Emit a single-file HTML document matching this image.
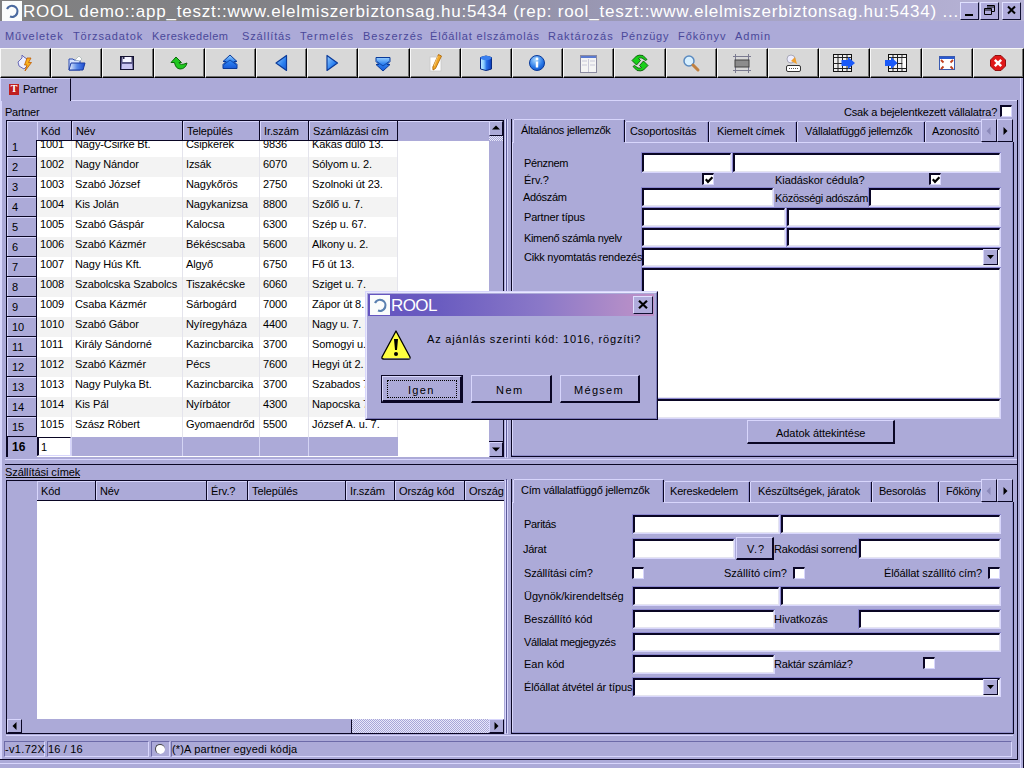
<!DOCTYPE html>
<html><head><meta charset="utf-8"><style>
html,body{margin:0;padding:0}
body{width:1024px;height:768px;overflow:hidden;position:relative;background:#acaad8;font-family:'Liberation Sans', sans-serif;font-size:11px;color:#000}
.a{position:absolute}
.t{white-space:nowrap}
svg{overflow:visible}
</style></head><body>
<div class="a" style="left:0px;top:0px;width:1024px;height:21px;background:linear-gradient(to right,#808080 0%,#828288 30%,#9c9ab8 62%,#b8b4d8 100%)"></div>
<div class="a" style="left:2px;top:1px;width:20px;height:20px;background:#fafcfc"></div>
<svg class="a" style="left:4px;top:3px" width="16" height="16" viewBox="0 0 16 16"><path d="M3 6 A5.5 5.5 0 1 1 6 13.5" stroke="#4a6aa0" stroke-width="2.2" fill="none"/></svg>
<div class="a t" style="left:23px;top:3px;font-size:17px;line-height:17px;color:#fff;letter-spacing:0.78px">ROOL demo::app_teszt::www.elelmiszerbiztonsag.hu:5434 (rep: rool_teszt::www.elelmiszerbiztonsag.hu:5434) ...</div>
<div class="a" style="left:960px;top:2px;width:19px;height:18px;background:#b0acdc;box-sizing:border-box;border-top:1px solid #e0e0ff;border-left:1px solid #e0e0ff;border-right:1px solid #101030;border-bottom:1px solid #101030;"></div>
<div class="a" style="left:965px;top:14px;width:8px;height:2px;background:#000"></div>
<div class="a" style="left:980px;top:2px;width:19px;height:18px;background:#b0acdc;box-sizing:border-box;border-top:1px solid #e0e0ff;border-left:1px solid #e0e0ff;border-right:1px solid #101030;border-bottom:1px solid #101030;"></div>
<svg class="a" style="left:984px;top:5px" width="11" height="10" viewBox="0 0 11 10"><path d="M3 0.5 H10.5 V6.5 H8 M3 2 H10.5 M0.5 3.5 H7.5 V9.5 H0.5 Z M0.5 5 H7.5" stroke="#000" stroke-width="1" fill="none"/></svg>
<div class="a" style="left:1002px;top:2px;width:19px;height:18px;background:#b0acdc;box-sizing:border-box;border-top:1px solid #e0e0ff;border-left:1px solid #e0e0ff;border-right:1px solid #101030;border-bottom:1px solid #101030;"></div>
<svg class="a" style="left:1007px;top:6px" width="9" height="8" viewBox="0 0 9 8"><path d="M1 0.5 L8 7.5 M8 0.5 L1 7.5" stroke="#000" stroke-width="2" fill="none"/></svg>
<div class="a t" style="left:5px;top:31px;font-size:11px;line-height:11px;color:#4a489a;letter-spacing:0.94px">Műveletek</div>
<div class="a t" style="left:73px;top:31px;font-size:11px;line-height:11px;color:#4a489a;letter-spacing:0.86px">Törzsadatok</div>
<div class="a t" style="left:152px;top:31px;font-size:11px;line-height:11px;color:#4a489a;letter-spacing:0.52px">Kereskedelem</div>
<div class="a t" style="left:242px;top:31px;font-size:11px;line-height:11px;color:#4a489a;letter-spacing:0.88px">Szállítás</div>
<div class="a t" style="left:300px;top:31px;font-size:11px;line-height:11px;color:#4a489a;letter-spacing:1.2px">Termelés</div>
<div class="a t" style="left:363px;top:31px;font-size:11px;line-height:11px;color:#4a489a;letter-spacing:1.0px">Beszerzés</div>
<div class="a t" style="left:430px;top:31px;font-size:11px;line-height:11px;color:#4a489a;letter-spacing:0.82px">Élőállat elszámolás</div>
<div class="a t" style="left:548px;top:31px;font-size:11px;line-height:11px;color:#4a489a;letter-spacing:1.0px">Raktározás</div>
<div class="a t" style="left:621px;top:31px;font-size:11px;line-height:11px;color:#4a489a;letter-spacing:0.78px">Pénzügy</div>
<div class="a t" style="left:678px;top:31px;font-size:11px;line-height:11px;color:#4a489a;letter-spacing:1.0px">Főkönyv</div>
<div class="a t" style="left:735px;top:31px;font-size:11px;line-height:11px;color:#4a489a;letter-spacing:1.0px">Admin</div>
<div class="a" style="left:0px;top:48px;width:51px;height:30px;background:#d8d8d8;box-sizing:border-box;border-top:1px solid #f8f8f8;border-left:1px solid #f8f8f8;border-right:1px solid #000;border-bottom:1px solid #000;box-shadow:inset -1px -1px 0 #707070"></div>
<div class="a" style="left:51px;top:48px;width:51px;height:30px;background:#d8d8d8;box-sizing:border-box;border-top:1px solid #f8f8f8;border-left:1px solid #f8f8f8;border-right:1px solid #000;border-bottom:1px solid #000;box-shadow:inset -1px -1px 0 #707070"></div>
<div class="a" style="left:102px;top:48px;width:52px;height:30px;background:#d8d8d8;box-sizing:border-box;border-top:1px solid #f8f8f8;border-left:1px solid #f8f8f8;border-right:1px solid #000;border-bottom:1px solid #000;box-shadow:inset -1px -1px 0 #707070"></div>
<div class="a" style="left:154px;top:48px;width:51px;height:30px;background:#d8d8d8;box-sizing:border-box;border-top:1px solid #f8f8f8;border-left:1px solid #f8f8f8;border-right:1px solid #000;border-bottom:1px solid #000;box-shadow:inset -1px -1px 0 #707070"></div>
<div class="a" style="left:205px;top:48px;width:51px;height:30px;background:#d8d8d8;box-sizing:border-box;border-top:1px solid #f8f8f8;border-left:1px solid #f8f8f8;border-right:1px solid #000;border-bottom:1px solid #000;box-shadow:inset -1px -1px 0 #707070"></div>
<div class="a" style="left:256px;top:48px;width:51px;height:30px;background:#d8d8d8;box-sizing:border-box;border-top:1px solid #f8f8f8;border-left:1px solid #f8f8f8;border-right:1px solid #000;border-bottom:1px solid #000;box-shadow:inset -1px -1px 0 #707070"></div>
<div class="a" style="left:307px;top:48px;width:51px;height:30px;background:#d8d8d8;box-sizing:border-box;border-top:1px solid #f8f8f8;border-left:1px solid #f8f8f8;border-right:1px solid #000;border-bottom:1px solid #000;box-shadow:inset -1px -1px 0 #707070"></div>
<div class="a" style="left:358px;top:48px;width:52px;height:30px;background:#d8d8d8;box-sizing:border-box;border-top:1px solid #f8f8f8;border-left:1px solid #f8f8f8;border-right:1px solid #000;border-bottom:1px solid #000;box-shadow:inset -1px -1px 0 #707070"></div>
<div class="a" style="left:410px;top:48px;width:51px;height:30px;background:#d8d8d8;box-sizing:border-box;border-top:1px solid #f8f8f8;border-left:1px solid #f8f8f8;border-right:1px solid #000;border-bottom:1px solid #000;box-shadow:inset -1px -1px 0 #707070"></div>
<div class="a" style="left:461px;top:48px;width:51px;height:30px;background:#d8d8d8;box-sizing:border-box;border-top:1px solid #f8f8f8;border-left:1px solid #f8f8f8;border-right:1px solid #000;border-bottom:1px solid #000;box-shadow:inset -1px -1px 0 #707070"></div>
<div class="a" style="left:512px;top:48px;width:51px;height:30px;background:#d8d8d8;box-sizing:border-box;border-top:1px solid #f8f8f8;border-left:1px solid #f8f8f8;border-right:1px solid #000;border-bottom:1px solid #000;box-shadow:inset -1px -1px 0 #707070"></div>
<div class="a" style="left:563px;top:48px;width:51px;height:30px;background:#d8d8d8;box-sizing:border-box;border-top:1px solid #f8f8f8;border-left:1px solid #f8f8f8;border-right:1px solid #000;border-bottom:1px solid #000;box-shadow:inset -1px -1px 0 #707070"></div>
<div class="a" style="left:614px;top:48px;width:52px;height:30px;background:#d8d8d8;box-sizing:border-box;border-top:1px solid #f8f8f8;border-left:1px solid #f8f8f8;border-right:1px solid #000;border-bottom:1px solid #000;box-shadow:inset -1px -1px 0 #707070"></div>
<div class="a" style="left:666px;top:48px;width:51px;height:30px;background:#d8d8d8;box-sizing:border-box;border-top:1px solid #f8f8f8;border-left:1px solid #f8f8f8;border-right:1px solid #000;border-bottom:1px solid #000;box-shadow:inset -1px -1px 0 #707070"></div>
<div class="a" style="left:717px;top:48px;width:51px;height:30px;background:#d8d8d8;box-sizing:border-box;border-top:1px solid #f8f8f8;border-left:1px solid #f8f8f8;border-right:1px solid #000;border-bottom:1px solid #000;box-shadow:inset -1px -1px 0 #707070"></div>
<div class="a" style="left:768px;top:48px;width:51px;height:30px;background:#d8d8d8;box-sizing:border-box;border-top:1px solid #f8f8f8;border-left:1px solid #f8f8f8;border-right:1px solid #000;border-bottom:1px solid #000;box-shadow:inset -1px -1px 0 #707070"></div>
<div class="a" style="left:819px;top:48px;width:51px;height:30px;background:#d8d8d8;box-sizing:border-box;border-top:1px solid #f8f8f8;border-left:1px solid #f8f8f8;border-right:1px solid #000;border-bottom:1px solid #000;box-shadow:inset -1px -1px 0 #707070"></div>
<div class="a" style="left:870px;top:48px;width:52px;height:30px;background:#d8d8d8;box-sizing:border-box;border-top:1px solid #f8f8f8;border-left:1px solid #f8f8f8;border-right:1px solid #000;border-bottom:1px solid #000;box-shadow:inset -1px -1px 0 #707070"></div>
<div class="a" style="left:922px;top:48px;width:51px;height:30px;background:#d8d8d8;box-sizing:border-box;border-top:1px solid #f8f8f8;border-left:1px solid #f8f8f8;border-right:1px solid #000;border-bottom:1px solid #000;box-shadow:inset -1px -1px 0 #707070"></div>
<div class="a" style="left:973px;top:48px;width:51px;height:30px;background:#d8d8d8;box-sizing:border-box;border-top:1px solid #f8f8f8;border-left:1px solid #f8f8f8;border-right:1px solid #000;border-bottom:1px solid #000;box-shadow:inset -1px -1px 0 #707070"></div>
<svg class="a" style="left:15px;top:53px" width="22" height="20" viewBox="0 0 22 20"><path d="M3 9 L7 5 L7 2 L9 4 L12 6 L13 12 L9 16 L4 13 Z" fill="#eceeff" stroke="#6a6ab8" stroke-width="1"/><path d="M12 5 L16 5 L13.5 9.5 L16.5 9.5 L10 18 L12 12 L9.5 12 Z" fill="#f8b020" stroke="#c05a00" stroke-width="0.8"/></svg>
<svg class="a" style="left:66px;top:53px" width="22" height="20" viewBox="0 0 22 20"><defs><linearGradient id="fg" x1="0" x2="1"><stop offset="0" stop-color="#f0f4ff"/><stop offset="0.5" stop-color="#5a8ae8"/><stop offset="1" stop-color="#1a4ad0"/></linearGradient></defs><path d="M3 6 H7 L8 7 H14 V17 H3 Z" fill="#d8e4ff" stroke="#2a4ab0" stroke-width="1"/><path d="M9 7 L13 3 L16 6 L14 8Z" fill="#fff" stroke="#9aa" stroke-width="0.6"/><path d="M5 10 H19 L17 17 H3 Z" fill="url(#fg)" stroke="#1a3aa0" stroke-width="1"/></svg>
<svg class="a" style="left:117px;top:53px" width="22" height="20" viewBox="0 0 22 20"><defs><linearGradient id="fl" x1="0" y1="0" x2="0" y2="1"><stop offset="0" stop-color="#2a2850"/><stop offset="1" stop-color="#8a88c0"/></linearGradient></defs><rect x="3.5" y="3.5" width="13" height="13" fill="url(#fl)" stroke="#141230"/><rect x="5.5" y="4" width="9" height="5" fill="#f4f4ff"/><rect x="5" y="11" width="10" height="5" fill="#c8c4f0"/><rect x="6" y="4" width="1.5" height="2" fill="#2a2850"/></svg>
<svg class="a" style="left:169px;top:53px" width="22" height="20" viewBox="0 0 22 20"><path d="M7 4 L12.5 9.5 L10 9.5 Q11 13 18 10 Q16.5 16 11 16 Q6.5 15.5 5.5 9.5 L2 9.5 Z" fill="#20c820" stroke="#0a6a0a" stroke-width="1" stroke-linejoin="round"/></svg>
<svg class="a" style="left:220px;top:53px" width="22" height="20" viewBox="0 0 22 20"><defs><linearGradient id="bu" x1="0" y1="0" x2="0" y2="1"><stop offset="0" stop-color="#9ad0ff"/><stop offset="0.5" stop-color="#2a80f0"/><stop offset="1" stop-color="#1a5ad8"/></linearGradient></defs><path d="M10 2 L17 8.5 L14 8.5 L17 11.5 L17 15.5 L3 15.5 L3 11.5 L6 8.5 L3 8.5 Z" fill="url(#bu)" stroke="#0a3a9a" stroke-width="1" stroke-linejoin="round"/><path d="M4 11.5 L10 7 L16 11.5" stroke="#0a3a9a" stroke-width="0.8" fill="none"/></svg>
<svg class="a" style="left:271px;top:53px" width="22" height="20" viewBox="0 0 22 20"><defs><linearGradient id="bl" x1="0" y1="0" x2="1" y2="1"><stop offset="0" stop-color="#9ad0ff"/><stop offset="0.6" stop-color="#2a80f0"/><stop offset="1" stop-color="#1a5ad8"/></linearGradient></defs><path d="M15.5 2.5 L15.5 17.5 L5 10 Z" fill="url(#bl)" stroke="#0a3a9a" stroke-width="1.2" stroke-linejoin="round"/></svg>
<svg class="a" style="left:322px;top:53px" width="22" height="20" viewBox="0 0 22 20"><path d="M5 2.5 L5 17.5 L15.5 10 Z" fill="url(#bl)" stroke="#0a3a9a" stroke-width="1.2" stroke-linejoin="round"/></svg>
<svg class="a" style="left:373px;top:53px" width="22" height="20" viewBox="0 0 22 20"><path d="M10 18 L17 11.5 L14 11.5 L17 8.5 L17 4.5 L3 4.5 L3 8.5 L6 11.5 L3 11.5 Z" fill="url(#bu)" stroke="#0a3a9a" stroke-width="1" stroke-linejoin="round"/><path d="M4 8.5 L10 13 L16 8.5" stroke="#0a3a9a" stroke-width="0.8" fill="none"/></svg>
<svg class="a" style="left:425px;top:53px" width="22" height="20" viewBox="0 0 22 20"><rect x="5" y="4" width="11" height="14" fill="#fff" stroke="#c8c8c8" stroke-width="0.8"/><path d="M13.5 1.5 L16.5 3 L10.5 15.5 L8 17 L7.8 14 Z" fill="#f0a828" stroke="#a86000" stroke-width="0.8"/><path d="M13 3 L9 13" stroke="#ffd890" stroke-width="0.8"/></svg>
<svg class="a" style="left:476px;top:53px" width="22" height="20" viewBox="0 0 22 20"><defs><linearGradient id="cg" x1="0" x2="1"><stop offset="0" stop-color="#c8ecff"/><stop offset="0.3" stop-color="#88ccff"/><stop offset="0.55" stop-color="#2a70e8"/><stop offset="1" stop-color="#0a3ab8"/></linearGradient></defs><path d="M4.5 4.5 Q10 1.5 15.5 4.5 V16 Q10 19 4.5 16 Z" fill="url(#cg)" stroke="#0a2a80" stroke-width="1"/><ellipse cx="10" cy="5" rx="5.5" ry="2.2" fill="#3a80f0"/></svg>
<svg class="a" style="left:527px;top:53px" width="22" height="20" viewBox="0 0 22 20"><defs><radialGradient id="ig" cx="0.4" cy="0.3" r="0.8"><stop offset="0" stop-color="#a8d8ff"/><stop offset="0.6" stop-color="#2a7ae8"/><stop offset="1" stop-color="#0a4ac0"/></radialGradient></defs><circle cx="10" cy="10" r="7.5" fill="url(#ig)" stroke="#0a3a9a" stroke-width="1"/><circle cx="10" cy="6" r="1.4" fill="#fff"/><rect x="8.8" y="8.5" width="2.4" height="6" fill="#fff"/></svg>
<svg class="a" style="left:578px;top:53px" width="22" height="20" viewBox="0 0 22 20"><rect x="2.5" y="2.5" width="16" height="17" fill="#f4f4f4" stroke="#8a8aa0"/><rect x="3" y="3" width="15" height="2" fill="#5a7ad0"/><path d="M10.5 6 V19 M4 8 H9 M12 8 H17 M4 12 H9 M12 12 H17" stroke="#c8c8d8" stroke-width="1"/></svg>
<svg class="a" style="left:629px;top:53px" width="22" height="20" viewBox="0 0 22 20"><path d="M3 7.5 L7.5 3 Q10 1.5 14 2.5 L18 6.5 L16.5 7.5 L13 5 Q10.5 4.5 9.5 5.5 L11.5 7.5 L7.5 12 Z" fill="#18d018" stroke="#0a5a0a" stroke-width="0.9" stroke-linejoin="round"/><path d="M19 12.5 L14.5 17 Q12 18.5 8 17.5 L4 13.5 L5.5 12.5 L9 15 Q11.5 15.5 12.5 14.5 L10.5 12.5 L14.5 8 Z" fill="#18d018" stroke="#0a5a0a" stroke-width="0.9" stroke-linejoin="round"/></svg>
<svg class="a" style="left:681px;top:53px" width="22" height="20" viewBox="0 0 22 20"><circle cx="8" cy="8" r="5" fill="#d8f0ff" stroke="#5a8ac0" stroke-width="1.5"/><path d="M12 12 L17 17" stroke="#c08040" stroke-width="3" stroke-linecap="round"/></svg>
<svg class="a" style="left:732px;top:53px" width="22" height="20" viewBox="0 0 22 20"><path d="M1 3.5 H19 M1 17.5 H19 M3.5 1 V20 M16.5 1 V20" stroke="#7a7a90" stroke-width="1"/><rect x="3" y="7" width="14" height="7" fill="#8c8c8c" stroke="#404040" stroke-width="1"/></svg>
<svg class="a" style="left:783px;top:53px" width="22" height="20" viewBox="0 0 22 20"><circle cx="8" cy="6" r="4" fill="#eef" stroke="#99a" stroke-width="0.8"/><path d="M8 8 L12 4 L14 11 Z" fill="#f0a030"/><rect x="3.5" y="12.5" width="14" height="6" rx="1.5" fill="#fff" stroke="#333" stroke-width="1"/><path d="M6 15.5 H15" stroke="#555" stroke-dasharray="1 1"/></svg>
<svg class="a" style="left:834px;top:53px" width="22" height="20" viewBox="0 0 22 20"><rect x="-0.5" y="1.5" width="18" height="17" fill="#eee" stroke="#111"/><path d="M-0.5 4.5 H17.5 M-0.5 10.5 H17.5 M-0.5 15.5 H17.5 M4 1.5 V18.5 M8.5 1.5 V18.5 M13 1.5 V18.5" stroke="#222"/><path d="M7.5 7 H14 V4 L21 10 L14 16 V13 H7.5Z" fill="#1a5af8"/></svg>
<svg class="a" style="left:885px;top:53px" width="22" height="20" viewBox="0 0 22 20"><rect x="3.5" y="1.5" width="18" height="17" fill="#eee" stroke="#111"/><path d="M3.5 4.5 H21.5 M3.5 10.5 H21.5 M3.5 15.5 H21.5 M8 1.5 V18.5 M12.5 1.5 V18.5 M17 1.5 V18.5" stroke="#222"/><rect x="17.5" y="5" width="3.5" height="10" fill="#fff"/><path d="M0 7 H6 V4 L12.5 10 L6 16 V13 H0Z" fill="#1a5af8"/></svg>
<svg class="a" style="left:937px;top:53px" width="22" height="20" viewBox="0 0 22 20"><rect x="2.5" y="3.5" width="15" height="13" fill="#fff" stroke="#3a5ab0"/><rect x="3" y="4" width="14" height="2" fill="#2a5ad0"/><path d="M4 7 L6.5 9.5 M16 7 L13.5 9.5 M4 16 L6.5 13.5 M16 16 L13.5 13.5" stroke="#c04020" stroke-width="1.8"/></svg>
<svg class="a" style="left:988px;top:53px" width="22" height="20" viewBox="0 0 22 20"><path d="M7 2.5 H13 L17.5 7 V13 L13 17.5 H7 L2.5 13 V7 Z" fill="#e01818" stroke="#901010" stroke-width="1"/><path d="M6.8 6.8 L13.2 13.2 M13.2 6.8 L6.8 13.2" stroke="#fff" stroke-width="2.4"/></svg>
<div class="a" style="left:0px;top:78px;width:1024px;height:690px;background:#acaad8"></div>
<div class="a" style="left:71px;top:100px;width:946px;height:1px;background:#d8d6fc"></div>
<div class="a" style="left:0px;top:78px;width:71px;height:23px;background:#acaad8;box-sizing:border-box;border-top:1px solid #d8d6fc;border-left:1px solid #d8d6fc;border-right:1px solid #0a0624;"></div>
<div class="a" style="left:9px;top:84px;width:10px;height:11px;background:#c02020;border:0"></div>
<div class="a" style="left:9px;top:83px;width:10px;height:12px;color:#fff;font:bold 10px/12px 'Liberation Serif';text-align:center">T</div>
<div class="a t" style="left:23px;top:84px;font-size:11px;line-height:11px;letter-spacing:-0.25px">Partner</div>
<div class="a" style="left:0px;top:101px;width:2px;height:658px;background:#d8d6fc"></div>
<div class="a" style="left:1017px;top:100px;width:1px;height:660px;background:#0a0624"></div>
<div class="a" style="left:0px;top:759px;width:1018px;height:1px;background:#0a0624"></div>
<div class="a" style="left:1020px;top:78px;width:1px;height:690px;background:#d8d6fc"></div>
<div class="a" style="left:1023px;top:78px;width:1px;height:690px;background:#0a0624"></div>
<div class="a" style="left:0px;top:763px;width:1021px;height:1px;background:#d8d6fc"></div>
<div class="a t" style="left:5px;top:107px;font-size:11px;line-height:11px;letter-spacing:-0.25px">Partner</div>
<div class="a t" style="left:844px;top:107px;font-size:11px;line-height:11px;letter-spacing:-0.16px">Csak a bejelentkezett vállalatra?</div>
<div class="a" style="left:1000px;top:105px;width:12px;height:12px;background:#fff;box-sizing:border-box;border-top:2px solid #0a0624;border-left:2px solid #0a0624;border-right:1px solid #d8d6fc;border-bottom:1px solid #d8d6fc"></div>
<div class="a" style="left:6px;top:120px;width:1px;height:337px;background:#0a0624"></div>
<div class="a" style="left:6px;top:120px;width:498px;height:1px;background:#0a0624"></div>
<div class="a" style="left:503px;top:120px;width:1px;height:337px;background:#0a0624"></div>
<div class="a" style="left:37px;top:141px;width:452px;height:316px;background:#fff"></div>
<div class="a" style="left:37px;top:141px;width:452px;height:296px;overflow:hidden"><div class="a t" style="left:3px;top:-2px;font-size:11px;line-height:11px;letter-spacing:-0.1px">1001</div><div class="a t" style="left:38px;top:-2px;font-size:11px;line-height:11px;letter-spacing:-0.1px">Nagy-Csirke Bt.</div><div class="a t" style="left:149px;top:-2px;font-size:11px;line-height:11px;letter-spacing:-0.1px">Csipkerek</div><div class="a t" style="left:226px;top:-2px;font-size:11px;line-height:11px;letter-spacing:-0.1px">9836</div><div class="a t" style="left:275px;top:-2px;font-size:11px;line-height:11px;letter-spacing:-0.1px">Kakas dűlő 13.</div><div class="a" style="left:0px;top:16px;width:361px;height:20px;background:#f3f3f3"></div><div class="a t" style="left:3px;top:18px;font-size:11px;line-height:11px;letter-spacing:-0.1px">1002</div><div class="a t" style="left:38px;top:18px;font-size:11px;line-height:11px;letter-spacing:-0.1px">Nagy Nándor</div><div class="a t" style="left:149px;top:18px;font-size:11px;line-height:11px;letter-spacing:-0.1px">Izsák</div><div class="a t" style="left:226px;top:18px;font-size:11px;line-height:11px;letter-spacing:-0.1px">6070</div><div class="a t" style="left:275px;top:18px;font-size:11px;line-height:11px;letter-spacing:-0.1px">Sólyom u. 2.</div><div class="a t" style="left:3px;top:38px;font-size:11px;line-height:11px;letter-spacing:-0.1px">1003</div><div class="a t" style="left:38px;top:38px;font-size:11px;line-height:11px;letter-spacing:-0.1px">Szabó József</div><div class="a t" style="left:149px;top:38px;font-size:11px;line-height:11px;letter-spacing:-0.1px">Nagykőrös</div><div class="a t" style="left:226px;top:38px;font-size:11px;line-height:11px;letter-spacing:-0.1px">2750</div><div class="a t" style="left:275px;top:38px;font-size:11px;line-height:11px;letter-spacing:-0.1px">Szolnoki út 23.</div><div class="a" style="left:0px;top:56px;width:361px;height:20px;background:#f3f3f3"></div><div class="a t" style="left:3px;top:58px;font-size:11px;line-height:11px;letter-spacing:-0.1px">1004</div><div class="a t" style="left:38px;top:58px;font-size:11px;line-height:11px;letter-spacing:-0.1px">Kis Jolán</div><div class="a t" style="left:149px;top:58px;font-size:11px;line-height:11px;letter-spacing:-0.1px">Nagykanizsa</div><div class="a t" style="left:226px;top:58px;font-size:11px;line-height:11px;letter-spacing:-0.1px">8800</div><div class="a t" style="left:275px;top:58px;font-size:11px;line-height:11px;letter-spacing:-0.1px">Szőlő u. 7.</div><div class="a t" style="left:3px;top:78px;font-size:11px;line-height:11px;letter-spacing:-0.1px">1005</div><div class="a t" style="left:38px;top:78px;font-size:11px;line-height:11px;letter-spacing:-0.1px">Szabó Gáspár</div><div class="a t" style="left:149px;top:78px;font-size:11px;line-height:11px;letter-spacing:-0.1px">Kalocsa</div><div class="a t" style="left:226px;top:78px;font-size:11px;line-height:11px;letter-spacing:-0.1px">6300</div><div class="a t" style="left:275px;top:78px;font-size:11px;line-height:11px;letter-spacing:-0.1px">Szép u. 67.</div><div class="a" style="left:0px;top:96px;width:361px;height:20px;background:#f3f3f3"></div><div class="a t" style="left:3px;top:98px;font-size:11px;line-height:11px;letter-spacing:-0.1px">1006</div><div class="a t" style="left:38px;top:98px;font-size:11px;line-height:11px;letter-spacing:-0.1px">Szabó Kázmér</div><div class="a t" style="left:149px;top:98px;font-size:11px;line-height:11px;letter-spacing:-0.1px">Békéscsaba</div><div class="a t" style="left:226px;top:98px;font-size:11px;line-height:11px;letter-spacing:-0.1px">5600</div><div class="a t" style="left:275px;top:98px;font-size:11px;line-height:11px;letter-spacing:-0.1px">Alkony u. 2.</div><div class="a t" style="left:3px;top:118px;font-size:11px;line-height:11px;letter-spacing:-0.1px">1007</div><div class="a t" style="left:38px;top:118px;font-size:11px;line-height:11px;letter-spacing:-0.1px">Nagy Hús Kft.</div><div class="a t" style="left:149px;top:118px;font-size:11px;line-height:11px;letter-spacing:-0.1px">Algyő</div><div class="a t" style="left:226px;top:118px;font-size:11px;line-height:11px;letter-spacing:-0.1px">6750</div><div class="a t" style="left:275px;top:118px;font-size:11px;line-height:11px;letter-spacing:-0.1px">Fő út 13.</div><div class="a" style="left:0px;top:136px;width:361px;height:20px;background:#f3f3f3"></div><div class="a t" style="left:3px;top:138px;font-size:11px;line-height:11px;letter-spacing:-0.1px">1008</div><div class="a t" style="left:38px;top:138px;font-size:11px;line-height:11px;letter-spacing:-0.1px">Szabolcska Szabolcs</div><div class="a t" style="left:149px;top:138px;font-size:11px;line-height:11px;letter-spacing:-0.1px">Tiszakécske</div><div class="a t" style="left:226px;top:138px;font-size:11px;line-height:11px;letter-spacing:-0.1px">6060</div><div class="a t" style="left:275px;top:138px;font-size:11px;line-height:11px;letter-spacing:-0.1px">Sziget u. 7.</div><div class="a t" style="left:3px;top:158px;font-size:11px;line-height:11px;letter-spacing:-0.1px">1009</div><div class="a t" style="left:38px;top:158px;font-size:11px;line-height:11px;letter-spacing:-0.1px">Csaba Kázmér</div><div class="a t" style="left:149px;top:158px;font-size:11px;line-height:11px;letter-spacing:-0.1px">Sárbogárd</div><div class="a t" style="left:226px;top:158px;font-size:11px;line-height:11px;letter-spacing:-0.1px">7000</div><div class="a t" style="left:275px;top:158px;font-size:11px;line-height:11px;letter-spacing:-0.1px">Zápor út 8.</div><div class="a" style="left:0px;top:176px;width:361px;height:20px;background:#f3f3f3"></div><div class="a t" style="left:3px;top:178px;font-size:11px;line-height:11px;letter-spacing:-0.1px">1010</div><div class="a t" style="left:38px;top:178px;font-size:11px;line-height:11px;letter-spacing:-0.1px">Szabó Gábor</div><div class="a t" style="left:149px;top:178px;font-size:11px;line-height:11px;letter-spacing:-0.1px">Nyíregyháza</div><div class="a t" style="left:226px;top:178px;font-size:11px;line-height:11px;letter-spacing:-0.1px">4400</div><div class="a t" style="left:275px;top:178px;font-size:11px;line-height:11px;letter-spacing:-0.1px">Nagy u. 7.</div><div class="a t" style="left:3px;top:198px;font-size:11px;line-height:11px;letter-spacing:-0.1px">1011</div><div class="a t" style="left:38px;top:198px;font-size:11px;line-height:11px;letter-spacing:-0.1px">Király Sándorné</div><div class="a t" style="left:149px;top:198px;font-size:11px;line-height:11px;letter-spacing:-0.1px">Kazincbarcika</div><div class="a t" style="left:226px;top:198px;font-size:11px;line-height:11px;letter-spacing:-0.1px">3700</div><div class="a t" style="left:275px;top:198px;font-size:11px;line-height:11px;letter-spacing:-0.1px">Somogyi u. 7.</div><div class="a" style="left:0px;top:216px;width:361px;height:20px;background:#f3f3f3"></div><div class="a t" style="left:3px;top:218px;font-size:11px;line-height:11px;letter-spacing:-0.1px">1012</div><div class="a t" style="left:38px;top:218px;font-size:11px;line-height:11px;letter-spacing:-0.1px">Szabó Kázmér</div><div class="a t" style="left:149px;top:218px;font-size:11px;line-height:11px;letter-spacing:-0.1px">Pécs</div><div class="a t" style="left:226px;top:218px;font-size:11px;line-height:11px;letter-spacing:-0.1px">7600</div><div class="a t" style="left:275px;top:218px;font-size:11px;line-height:11px;letter-spacing:-0.1px">Hegyi út 2.</div><div class="a t" style="left:3px;top:238px;font-size:11px;line-height:11px;letter-spacing:-0.1px">1013</div><div class="a t" style="left:38px;top:238px;font-size:11px;line-height:11px;letter-spacing:-0.1px">Nagy Pulyka Bt.</div><div class="a t" style="left:149px;top:238px;font-size:11px;line-height:11px;letter-spacing:-0.1px">Kazincbarcika</div><div class="a t" style="left:226px;top:238px;font-size:11px;line-height:11px;letter-spacing:-0.1px">3700</div><div class="a t" style="left:275px;top:238px;font-size:11px;line-height:11px;letter-spacing:-0.1px">Szabados 7.</div><div class="a" style="left:0px;top:256px;width:361px;height:20px;background:#f3f3f3"></div><div class="a t" style="left:3px;top:258px;font-size:11px;line-height:11px;letter-spacing:-0.1px">1014</div><div class="a t" style="left:38px;top:258px;font-size:11px;line-height:11px;letter-spacing:-0.1px">Kis Pál</div><div class="a t" style="left:149px;top:258px;font-size:11px;line-height:11px;letter-spacing:-0.1px">Nyírbátor</div><div class="a t" style="left:226px;top:258px;font-size:11px;line-height:11px;letter-spacing:-0.1px">4300</div><div class="a t" style="left:275px;top:258px;font-size:11px;line-height:11px;letter-spacing:-0.1px">Napocska 7.</div><div class="a t" style="left:3px;top:278px;font-size:11px;line-height:11px;letter-spacing:-0.1px">1015</div><div class="a t" style="left:38px;top:278px;font-size:11px;line-height:11px;letter-spacing:-0.1px">Szász Róbert</div><div class="a t" style="left:149px;top:278px;font-size:11px;line-height:11px;letter-spacing:-0.1px">Gyomaendrőd</div><div class="a t" style="left:226px;top:278px;font-size:11px;line-height:11px;letter-spacing:-0.1px">5500</div><div class="a t" style="left:275px;top:278px;font-size:11px;line-height:11px;letter-spacing:-0.1px">József A. u. 7.</div><div class="a" style="left:34px;top:0px;width:1px;height:296px;background:#e4e4ec"></div><div class="a" style="left:145px;top:0px;width:1px;height:296px;background:#e4e4ec"></div><div class="a" style="left:222px;top:0px;width:1px;height:296px;background:#e4e4ec"></div><div class="a" style="left:271px;top:0px;width:1px;height:296px;background:#e4e4ec"></div><div class="a" style="left:360px;top:0px;width:1px;height:296px;background:#e4e4ec"></div></div>
<div class="a" style="left:7px;top:121px;width:482px;height:19px;background:#acaad8"></div>
<div class="a" style="left:7px;top:121px;width:482px;height:1px;background:#d8d6fc"></div>
<div class="a" style="left:37px;top:140px;width:361px;height:1px;background:#0a0624"></div>
<div class="a" style="left:37px;top:121px;width:1px;height:19px;background:#d8d6fc"></div>
<div class="a" style="left:71px;top:121px;width:1px;height:20px;background:#0a0624"></div>
<div class="a t" style="left:41px;top:126px;font-size:11px;line-height:11px;letter-spacing:-0.1px">Kód</div>
<div class="a" style="left:72px;top:121px;width:1px;height:19px;background:#d8d6fc"></div>
<div class="a" style="left:182px;top:121px;width:1px;height:20px;background:#0a0624"></div>
<div class="a t" style="left:76px;top:126px;font-size:11px;line-height:11px;letter-spacing:-0.1px">Név</div>
<div class="a" style="left:183px;top:121px;width:1px;height:19px;background:#d8d6fc"></div>
<div class="a" style="left:259px;top:121px;width:1px;height:20px;background:#0a0624"></div>
<div class="a t" style="left:187px;top:126px;font-size:11px;line-height:11px;letter-spacing:-0.1px">Település</div>
<div class="a" style="left:260px;top:121px;width:1px;height:19px;background:#d8d6fc"></div>
<div class="a" style="left:308px;top:121px;width:1px;height:20px;background:#0a0624"></div>
<div class="a t" style="left:264px;top:126px;font-size:11px;line-height:11px;letter-spacing:-0.1px">Ir.szám</div>
<div class="a" style="left:309px;top:121px;width:1px;height:19px;background:#d8d6fc"></div>
<div class="a" style="left:397px;top:121px;width:1px;height:20px;background:#0a0624"></div>
<div class="a t" style="left:313px;top:126px;font-size:11px;line-height:11px;letter-spacing:-0.1px">Számlázási cím</div>
<div class="a" style="left:7px;top:121px;width:30px;height:336px;background:#acaad8"></div>
<div class="a" style="left:7px;top:121px;width:1px;height:316px;background:#d8d6fc"></div>
<div class="a" style="left:7px;top:121px;width:30px;height:1px;background:#d8d6fc"></div>
<div class="a" style="left:36px;top:140px;width:1px;height:297px;background:#0a0624"></div>
<div class="a t" style="left:12px;top:142px;font-size:11px;line-height:11px;">1</div>
<div class="a" style="left:7px;top:156px;width:30px;height:1px;background:#0a0624"></div>
<div class="a" style="left:7px;top:157px;width:29px;height:1px;background:#d8d6fc"></div>
<div class="a t" style="left:12px;top:162px;font-size:11px;line-height:11px;">2</div>
<div class="a" style="left:7px;top:176px;width:30px;height:1px;background:#0a0624"></div>
<div class="a" style="left:7px;top:177px;width:29px;height:1px;background:#d8d6fc"></div>
<div class="a t" style="left:12px;top:182px;font-size:11px;line-height:11px;">3</div>
<div class="a" style="left:7px;top:196px;width:30px;height:1px;background:#0a0624"></div>
<div class="a" style="left:7px;top:197px;width:29px;height:1px;background:#d8d6fc"></div>
<div class="a t" style="left:12px;top:202px;font-size:11px;line-height:11px;">4</div>
<div class="a" style="left:7px;top:216px;width:30px;height:1px;background:#0a0624"></div>
<div class="a" style="left:7px;top:217px;width:29px;height:1px;background:#d8d6fc"></div>
<div class="a t" style="left:12px;top:222px;font-size:11px;line-height:11px;">5</div>
<div class="a" style="left:7px;top:236px;width:30px;height:1px;background:#0a0624"></div>
<div class="a" style="left:7px;top:237px;width:29px;height:1px;background:#d8d6fc"></div>
<div class="a t" style="left:12px;top:242px;font-size:11px;line-height:11px;">6</div>
<div class="a" style="left:7px;top:256px;width:30px;height:1px;background:#0a0624"></div>
<div class="a" style="left:7px;top:257px;width:29px;height:1px;background:#d8d6fc"></div>
<div class="a t" style="left:12px;top:262px;font-size:11px;line-height:11px;">7</div>
<div class="a" style="left:7px;top:276px;width:30px;height:1px;background:#0a0624"></div>
<div class="a" style="left:7px;top:277px;width:29px;height:1px;background:#d8d6fc"></div>
<div class="a t" style="left:12px;top:282px;font-size:11px;line-height:11px;">8</div>
<div class="a" style="left:7px;top:296px;width:30px;height:1px;background:#0a0624"></div>
<div class="a" style="left:7px;top:297px;width:29px;height:1px;background:#d8d6fc"></div>
<div class="a t" style="left:12px;top:302px;font-size:11px;line-height:11px;">9</div>
<div class="a" style="left:7px;top:316px;width:30px;height:1px;background:#0a0624"></div>
<div class="a" style="left:7px;top:317px;width:29px;height:1px;background:#d8d6fc"></div>
<div class="a t" style="left:12px;top:322px;font-size:11px;line-height:11px;">10</div>
<div class="a" style="left:7px;top:336px;width:30px;height:1px;background:#0a0624"></div>
<div class="a" style="left:7px;top:337px;width:29px;height:1px;background:#d8d6fc"></div>
<div class="a t" style="left:12px;top:342px;font-size:11px;line-height:11px;">11</div>
<div class="a" style="left:7px;top:356px;width:30px;height:1px;background:#0a0624"></div>
<div class="a" style="left:7px;top:357px;width:29px;height:1px;background:#d8d6fc"></div>
<div class="a t" style="left:12px;top:362px;font-size:11px;line-height:11px;">12</div>
<div class="a" style="left:7px;top:376px;width:30px;height:1px;background:#0a0624"></div>
<div class="a" style="left:7px;top:377px;width:29px;height:1px;background:#d8d6fc"></div>
<div class="a t" style="left:12px;top:382px;font-size:11px;line-height:11px;">13</div>
<div class="a" style="left:7px;top:396px;width:30px;height:1px;background:#0a0624"></div>
<div class="a" style="left:7px;top:397px;width:29px;height:1px;background:#d8d6fc"></div>
<div class="a t" style="left:12px;top:402px;font-size:11px;line-height:11px;">14</div>
<div class="a" style="left:7px;top:416px;width:30px;height:1px;background:#0a0624"></div>
<div class="a" style="left:7px;top:417px;width:29px;height:1px;background:#d8d6fc"></div>
<div class="a t" style="left:12px;top:422px;font-size:11px;line-height:11px;">15</div>
<div class="a" style="left:7px;top:436px;width:30px;height:1px;background:#0a0624"></div>
<div class="a" style="left:6px;top:437px;width:2px;height:20px;background:#0a0624"></div>
<div class="a t" style="left:12px;top:442px;font-size:11px;line-height:11px;font-weight:bold;font-size:12px">16</div>
<div class="a" style="left:71px;top:437px;width:327px;height:19px;background:#acaad8"></div>
<div class="a" style="left:71px;top:437px;width:1px;height:19px;background:#d4d4f4"></div>
<div class="a" style="left:182px;top:437px;width:1px;height:19px;background:#d4d4f4"></div>
<div class="a" style="left:259px;top:437px;width:1px;height:19px;background:#d4d4f4"></div>
<div class="a" style="left:308px;top:437px;width:1px;height:19px;background:#d4d4f4"></div>
<div class="a" style="left:37px;top:437px;width:34px;height:19px;background:#fff;box-sizing:border-box;border-top:1px solid #0a0624;border-left:2px solid #0a0624;border-right:1px solid #d8d6fc;border-bottom:1px solid #d8d6fc"></div>
<div class="a t" style="left:41px;top:442px;font-size:11px;line-height:11px;">1</div>
<div class="a" style="left:489px;top:121px;width:14px;height:336px;background:#acaad8"></div>
<div class="a" style="left:489px;top:136px;width:14px;height:5px;background:repeating-conic-gradient(#e8e8fa 0 25%,#a8a6d8 0 50%) 0 0/2px 2px"></div>
<div class="a" style="left:489px;top:121px;width:14px;height:15px;background:#acaad8;box-sizing:border-box;border-top:1px solid #d8d6fc;border-left:1px solid #d8d6fc;border-right:1px solid #0a0624;border-bottom:1px solid #0a0624;"></div>
<svg class="a" style="left:492px;top:125px" width="8" height="5" viewBox="0 0 8 5"><path d="M0 4.5 L4 0.5 L8 4.5Z" fill="#000"/></svg>
<div class="a" style="left:489px;top:441px;width:14px;height:1px;background:#0a0624"></div>
<div class="a" style="left:489px;top:442px;width:14px;height:15px;background:#acaad8;box-sizing:border-box;border-top:1px solid #d8d6fc;border-left:1px solid #d8d6fc;border-right:1px solid #0a0624;border-bottom:1px solid #0a0624;"></div>
<svg class="a" style="left:492px;top:447px" width="8" height="5" viewBox="0 0 8 5"><path d="M0 0.5 L4 4.5 L8 0.5Z" fill="#000"/></svg>
<div class="a" style="left:505px;top:119px;width:1px;height:339px;background:#d8d6fc"></div>
<div class="a" style="left:507px;top:119px;width:1px;height:339px;background:#d8d6fc"></div>
<div class="a" style="left:505px;top:480px;width:1px;height:254px;background:#d8d6fc"></div>
<div class="a" style="left:507px;top:480px;width:1px;height:254px;background:#d8d6fc"></div>
<div class="a" style="left:5px;top:459px;width:1012px;height:1px;background:#d8d6fc"></div>
<div class="a" style="left:5px;top:464px;width:1012px;height:1px;background:#0a0624"></div>
<div class="a" style="left:506px;top:119px;width:1px;height:338px;background:#5c5a98"></div>
<div class="a" style="left:511px;top:119px;width:1px;height:338px;background:#0a0624"></div>
<div class="a" style="left:512px;top:142px;width:1px;height:314px;background:#d8d6fc"></div>
<div class="a" style="left:512px;top:456px;width:502px;height:1px;background:#0a0624"></div>
<div class="a" style="left:1013px;top:142px;width:1px;height:315px;background:#0a0624"></div>
<div class="a" style="left:1012px;top:143px;width:1px;height:313px;background:#8e8cc8"></div>
<div class="a" style="left:512px;top:455px;width:501px;height:1px;background:#8e8cc8"></div>
<div class="a" style="left:512px;top:142px;width:470px;height:1px;background:#d8d6fc"></div>
<div class="a" style="left:625px;top:121px;width:84px;height:21px;background:#acaad8"></div>
<div class="a" style="left:626px;top:121px;width:82px;height:1px;background:#d8d6fc"></div>
<div class="a" style="left:625px;top:122px;width:1px;height:20px;background:#d8d6fc"></div>
<div class="a" style="left:708px;top:122px;width:1px;height:20px;background:#0a0624"></div>
<div class="a" style="left:707px;top:122px;width:1px;height:20px;background:#8e8cc8"></div>
<div class="a t" style="left:630px;top:126px;font-size:11px;line-height:11px;letter-spacing:-0.12px;white-space:nowrap">Csoportosítás</div>
<div class="a" style="left:709px;top:121px;width:88px;height:21px;background:#acaad8"></div>
<div class="a" style="left:710px;top:121px;width:86px;height:1px;background:#d8d6fc"></div>
<div class="a" style="left:709px;top:122px;width:1px;height:20px;background:#d8d6fc"></div>
<div class="a" style="left:796px;top:122px;width:1px;height:20px;background:#0a0624"></div>
<div class="a" style="left:795px;top:122px;width:1px;height:20px;background:#8e8cc8"></div>
<div class="a t" style="left:717px;top:126px;font-size:11px;line-height:11px;letter-spacing:-0.12px;white-space:nowrap">Kiemelt címek</div>
<div class="a" style="left:797px;top:121px;width:128px;height:21px;background:#acaad8"></div>
<div class="a" style="left:798px;top:121px;width:126px;height:1px;background:#d8d6fc"></div>
<div class="a" style="left:797px;top:122px;width:1px;height:20px;background:#d8d6fc"></div>
<div class="a" style="left:924px;top:122px;width:1px;height:20px;background:#0a0624"></div>
<div class="a" style="left:923px;top:122px;width:1px;height:20px;background:#8e8cc8"></div>
<div class="a t" style="left:805px;top:126px;font-size:11px;line-height:11px;letter-spacing:-0.23px;white-space:nowrap">Vállalatfüggő jellemzők</div>
<div class="a" style="left:925px;top:121px;width:66px;height:21px;background:#acaad8"></div>
<div class="a" style="left:926px;top:121px;width:64px;height:1px;background:#d8d6fc"></div>
<div class="a" style="left:925px;top:122px;width:1px;height:20px;background:#d8d6fc"></div>
<div class="a" style="left:990px;top:122px;width:1px;height:20px;background:#0a0624"></div>
<div class="a" style="left:989px;top:122px;width:1px;height:20px;background:#8e8cc8"></div>
<div class="a t" style="left:932px;top:126px;font-size:11px;line-height:11px;letter-spacing:-0.2px;white-space:nowrap">Azonosító</div>
<div class="a" style="left:513px;top:119px;width:112px;height:24px;background:#acaad8"></div>
<div class="a" style="left:514px;top:119px;width:110px;height:1px;background:#d8d6fc"></div>
<div class="a" style="left:513px;top:120px;width:1px;height:23px;background:#d8d6fc"></div>
<div class="a" style="left:624px;top:120px;width:1px;height:22px;background:#0a0624"></div>
<div class="a" style="left:623px;top:120px;width:1px;height:22px;background:#8e8cc8"></div>
<div class="a t" style="left:521px;top:125px;font-size:11px;line-height:11px;letter-spacing:-0.24px;white-space:nowrap">Általános jellemzők</div>
<div class="a" style="left:981px;top:118px;width:32px;height:24px;background:#acaad8"></div>
<div class="a" style="left:981px;top:119px;width:16px;height:23px;background:#acaad8;box-sizing:border-box;border-top:1px solid #d8d6fc;border-left:1px solid #d8d6fc;border-right:1px solid #0a0624;border-bottom:1px solid #0a0624;"></div>
<div class="a" style="left:997px;top:119px;width:16px;height:23px;background:#acaad8;box-sizing:border-box;border-top:1px solid #d8d6fc;border-left:1px solid #d8d6fc;border-right:1px solid #0a0624;border-bottom:1px solid #0a0624;"></div>
<svg class="a" style="left:986px;top:127px" width="5" height="8" viewBox="0 0 5 8"><path d="M4.5 0 V8 L0.5 4Z" fill="#8a88b8"/></svg>
<svg class="a" style="left:1003px;top:127px" width="5" height="8" viewBox="0 0 5 8"><path d="M0.5 0 V8 L4.5 4Z" fill="#000"/></svg>
<div class="a t" style="left:524px;top:158px;font-size:11px;line-height:11px;letter-spacing:-0.33px;white-space:nowrap;z-index:2;">Pénznem</div>
<div class="a" style="left:641px;top:152px;width:91px;height:21px;background:#d8d6fc;box-sizing:border-box;border-top:1px solid #8c88d0;border-left:1px solid #8c88d0;"></div>
<div class="a" style="left:642px;top:153px;width:89px;height:19px;background:#fff;box-sizing:border-box;border-top:2px solid #0a0624;border-left:2px solid #0a0624;border-bottom:1px solid #e4e4f0;border-right:1px solid #e4e4f0"></div>
<div class="a" style="left:732px;top:152px;width:269px;height:21px;background:#d8d6fc;box-sizing:border-box;border-top:1px solid #8c88d0;border-left:1px solid #8c88d0;"></div>
<div class="a" style="left:733px;top:153px;width:267px;height:19px;background:#fff;box-sizing:border-box;border-top:2px solid #0a0624;border-left:2px solid #0a0624;border-bottom:1px solid #e4e4f0;border-right:1px solid #e4e4f0"></div>
<div class="a t" style="left:524px;top:175px;font-size:11px;line-height:11px;letter-spacing:0px;white-space:nowrap;z-index:2;">Érv.?</div>
<div class="a" style="left:702px;top:173px;width:12px;height:12px;background:#fff;box-sizing:border-box;border-top:2px solid #0a0624;border-left:2px solid #0a0624;border-right:1px solid #d8d6fc;border-bottom:1px solid #d8d6fc"></div>
<svg class="a" style="left:705px;top:176px" width="8" height="8" viewBox="0 0 8 8"><path d="M0.8 3.2 L3 5.8 L7.4 1.2" stroke="#000" stroke-width="2.2" fill="none"/></svg>
<div class="a t" style="left:775px;top:175px;font-size:11px;line-height:11px;letter-spacing:-0.06px;white-space:nowrap;z-index:2;">Kiadáskor cédula?</div>
<div class="a" style="left:929px;top:173px;width:12px;height:12px;background:#fff;box-sizing:border-box;border-top:2px solid #0a0624;border-left:2px solid #0a0624;border-right:1px solid #d8d6fc;border-bottom:1px solid #d8d6fc"></div>
<svg class="a" style="left:932px;top:176px" width="8" height="8" viewBox="0 0 8 8"><path d="M0.8 3.2 L3 5.8 L7.4 1.2" stroke="#000" stroke-width="2.2" fill="none"/></svg>
<div class="a t" style="left:523px;top:192px;font-size:11px;line-height:11px;letter-spacing:-0.33px;white-space:nowrap;z-index:2;">Adószám</div>
<div class="a" style="left:641px;top:187px;width:133px;height:20px;background:#d8d6fc;box-sizing:border-box;border-top:1px solid #8c88d0;border-left:1px solid #8c88d0;"></div>
<div class="a" style="left:642px;top:188px;width:131px;height:18px;background:#fff;box-sizing:border-box;border-top:2px solid #0a0624;border-left:2px solid #0a0624;border-bottom:1px solid #e4e4f0;border-right:1px solid #e4e4f0"></div>
<div class="a t" style="left:775px;top:193px;font-size:11px;line-height:11px;letter-spacing:-0.31px;white-space:nowrap;z-index:2;">Közösségi adószám</div>
<div class="a" style="left:868px;top:187px;width:133px;height:20px;background:#d8d6fc;box-sizing:border-box;border-top:1px solid #8c88d0;border-left:1px solid #8c88d0;"></div>
<div class="a" style="left:869px;top:188px;width:131px;height:18px;background:#fff;box-sizing:border-box;border-top:2px solid #0a0624;border-left:2px solid #0a0624;border-bottom:1px solid #e4e4f0;border-right:1px solid #e4e4f0"></div>
<div class="a t" style="left:524px;top:212px;font-size:11px;line-height:11px;letter-spacing:-0.17px;white-space:nowrap;z-index:2;">Partner típus</div>
<div class="a" style="left:641px;top:207px;width:145px;height:20px;background:#d8d6fc;box-sizing:border-box;border-top:1px solid #8c88d0;border-left:1px solid #8c88d0;"></div>
<div class="a" style="left:642px;top:208px;width:143px;height:18px;background:#fff;box-sizing:border-box;border-top:2px solid #0a0624;border-left:2px solid #0a0624;border-bottom:1px solid #e4e4f0;border-right:1px solid #e4e4f0"></div>
<div class="a" style="left:786px;top:207px;width:215px;height:20px;background:#d8d6fc;box-sizing:border-box;border-top:1px solid #8c88d0;border-left:1px solid #8c88d0;"></div>
<div class="a" style="left:787px;top:208px;width:213px;height:18px;background:#fff;box-sizing:border-box;border-top:2px solid #0a0624;border-left:2px solid #0a0624;border-bottom:1px solid #e4e4f0;border-right:1px solid #e4e4f0"></div>
<div class="a t" style="left:524px;top:233px;font-size:11px;line-height:11px;letter-spacing:-0.33px;white-space:nowrap;z-index:2;">Kimenő számla nyelv</div>
<div class="a" style="left:641px;top:227px;width:145px;height:20px;background:#d8d6fc;box-sizing:border-box;border-top:1px solid #8c88d0;border-left:1px solid #8c88d0;"></div>
<div class="a" style="left:642px;top:228px;width:143px;height:18px;background:#fff;box-sizing:border-box;border-top:2px solid #0a0624;border-left:2px solid #0a0624;border-bottom:1px solid #e4e4f0;border-right:1px solid #e4e4f0"></div>
<div class="a" style="left:786px;top:227px;width:215px;height:20px;background:#d8d6fc;box-sizing:border-box;border-top:1px solid #8c88d0;border-left:1px solid #8c88d0;"></div>
<div class="a" style="left:787px;top:228px;width:213px;height:18px;background:#fff;box-sizing:border-box;border-top:2px solid #0a0624;border-left:2px solid #0a0624;border-bottom:1px solid #e4e4f0;border-right:1px solid #e4e4f0"></div>
<div class="a t" style="left:524px;top:252px;font-size:11px;line-height:11px;letter-spacing:-0.23px;white-space:nowrap;z-index:2;">Cikk nyomtatás rendezés</div>
<div class="a" style="left:641px;top:247px;width:360px;height:20px;background:#d8d6fc;box-sizing:border-box;border-top:1px solid #8c88d0;border-left:1px solid #8c88d0;"></div>
<div class="a" style="left:642px;top:248px;width:358px;height:18px;background:#fff;box-sizing:border-box;border-top:2px solid #0a0624;border-left:2px solid #0a0624;border-bottom:1px solid #e4e4f0;border-right:1px solid #e4e4f0"></div>
<div class="a" style="left:983px;top:249px;width:15px;height:16px;background:#acaad8;box-sizing:border-box;border-top:1px solid #d8d6fc;border-left:1px solid #d8d6fc;border-right:1px solid #0a0624;border-bottom:1px solid #0a0624;"></div>
<svg class="a" style="left:987px;top:255px" width="7" height="4" viewBox="0 0 7 4"><path d="M0 0 H7 L3.5 4Z" fill="#000"/></svg>
<div class="a" style="left:641px;top:267px;width:360px;height:132px;background:#d8d6fc;box-sizing:border-box;border-top:1px solid #8c88d0;border-left:1px solid #8c88d0;"></div>
<div class="a" style="left:642px;top:268px;width:358px;height:130px;background:#fff;box-sizing:border-box;border-top:2px solid #0a0624;border-left:2px solid #0a0624;border-bottom:1px solid #e4e4f0;border-right:1px solid #e4e4f0"></div>
<div class="a" style="left:641px;top:398px;width:360px;height:21px;background:#d8d6fc;box-sizing:border-box;border-top:1px solid #8c88d0;border-left:1px solid #8c88d0;"></div>
<div class="a" style="left:642px;top:399px;width:358px;height:19px;background:#fff;box-sizing:border-box;border-top:2px solid #0a0624;border-left:2px solid #0a0624;border-bottom:1px solid #e4e4f0;border-right:1px solid #e4e4f0"></div>
<div class="a" style="left:747px;top:420px;width:148px;height:24px;background:#acaad8;box-sizing:border-box;border-top:1px solid #d8d6fc;border-left:1px solid #d8d6fc;border-right:1px solid #0a0624;border-bottom:1px solid #0a0624;border-bottom:2px solid #0a0624;border-right:2px solid #0a0624"></div>
<div class="a t" style="left:776px;top:428px;font-size:11px;line-height:11px;letter-spacing:-0.06px">Adatok áttekintése</div>
<div class="a t" style="left:5px;top:467px;font-size:11px;line-height:11px;letter-spacing:-0.07px">Szállítási címek</div>
<div class="a" style="left:6px;top:477px;width:74px;height:1px;background:#000"></div>
<div class="a" style="left:6px;top:480px;width:1px;height:254px;background:#0a0624"></div>
<div class="a" style="left:6px;top:480px;width:498px;height:1px;background:#0a0624"></div>
<div class="a" style="left:7px;top:481px;width:497px;height:252px;background:#acaad8"></div>
<div class="a" style="left:37px;top:501px;width:467px;height:218px;background:#fff"></div>
<div class="a" style="left:37px;top:481px;width:467px;height:1px;background:#d8d6fc"></div>
<div class="a" style="left:37px;top:500px;width:467px;height:1px;background:#0a0624"></div>
<div class="a" style="left:37px;top:481px;width:1px;height:19px;background:#d8d6fc"></div>
<div class="a" style="left:95px;top:481px;width:1px;height:20px;background:#0a0624"></div>
<div class="a t" style="left:41px;top:486px;font-size:11px;line-height:11px;letter-spacing:-0.1px;white-space:nowrap">Kód</div>
<div class="a" style="left:96px;top:481px;width:1px;height:19px;background:#d8d6fc"></div>
<div class="a" style="left:206px;top:481px;width:1px;height:20px;background:#0a0624"></div>
<div class="a t" style="left:100px;top:486px;font-size:11px;line-height:11px;letter-spacing:-0.1px;white-space:nowrap">Név</div>
<div class="a" style="left:207px;top:481px;width:1px;height:19px;background:#d8d6fc"></div>
<div class="a" style="left:247px;top:481px;width:1px;height:20px;background:#0a0624"></div>
<div class="a t" style="left:211px;top:486px;font-size:11px;line-height:11px;letter-spacing:-0.1px;white-space:nowrap">Érv.?</div>
<div class="a" style="left:248px;top:481px;width:1px;height:19px;background:#d8d6fc"></div>
<div class="a" style="left:345px;top:481px;width:1px;height:20px;background:#0a0624"></div>
<div class="a t" style="left:252px;top:486px;font-size:11px;line-height:11px;letter-spacing:-0.1px;white-space:nowrap">Település</div>
<div class="a" style="left:346px;top:481px;width:1px;height:19px;background:#d8d6fc"></div>
<div class="a" style="left:394px;top:481px;width:1px;height:20px;background:#0a0624"></div>
<div class="a t" style="left:350px;top:486px;font-size:11px;line-height:11px;letter-spacing:-0.1px;white-space:nowrap">Ir.szám</div>
<div class="a" style="left:395px;top:481px;width:1px;height:19px;background:#d8d6fc"></div>
<div class="a" style="left:464px;top:481px;width:1px;height:20px;background:#0a0624"></div>
<div class="a t" style="left:399px;top:486px;font-size:11px;line-height:11px;letter-spacing:-0.1px;white-space:nowrap">Ország kód</div>
<div class="a" style="left:465px;top:481px;width:1px;height:19px;background:#d8d6fc"></div>
<div class="a t" style="left:469px;top:486px;font-size:11px;line-height:11px;letter-spacing:-0.1px;white-space:nowrap">Ország</div>
<div class="a" style="left:7px;top:719px;width:497px;height:14px;background:repeating-conic-gradient(#e8e8fa 0 25%,#a8a6d8 0 50%) 0 0/2px 2px"></div>
<div class="a" style="left:22px;top:719px;width:330px;height:15px;background:#acaad8;box-sizing:border-box;border-top:1px solid #d8d6fc;border-left:1px solid #d8d6fc;border-right:1px solid #0a0624;border-bottom:1px solid #0a0624;border-top:1px solid #acaad8;border-left:1px solid #acaad8"></div>
<div class="a" style="left:7px;top:719px;width:15px;height:14px;background:#acaad8;box-sizing:border-box;border-top:1px solid #d8d6fc;border-left:1px solid #d8d6fc;border-right:1px solid #0a0624;border-bottom:1px solid #0a0624;"></div>
<svg class="a" style="left:12px;top:722px" width="5" height="8" viewBox="0 0 5 8"><path d="M4.5 0 V8 L0.5 4Z" fill="#000"/></svg>
<div class="a" style="left:489px;top:719px;width:15px;height:14px;background:#acaad8;box-sizing:border-box;border-top:1px solid #d8d6fc;border-left:1px solid #d8d6fc;border-right:1px solid #0a0624;border-bottom:1px solid #0a0624;"></div>
<svg class="a" style="left:494px;top:722px" width="5" height="8" viewBox="0 0 5 8"><path d="M0.5 0 V8 L4.5 4Z" fill="#000"/></svg>
<div class="a" style="left:6px;top:733px;width:498px;height:1px;background:#0a0624"></div>
<div class="a" style="left:6px;top:735px;width:1007px;height:1px;background:#d8d6fc"></div>
<div class="a" style="left:506px;top:479px;width:1px;height:254px;background:#5c5a98"></div>
<div class="a" style="left:511px;top:479px;width:1px;height:255px;background:#0a0624"></div>
<div class="a" style="left:512px;top:502px;width:1px;height:231px;background:#d8d6fc"></div>
<div class="a" style="left:512px;top:733px;width:502px;height:1px;background:#0a0624"></div>
<div class="a" style="left:1013px;top:502px;width:1px;height:232px;background:#0a0624"></div>
<div class="a" style="left:1012px;top:503px;width:1px;height:230px;background:#8e8cc8"></div>
<div class="a" style="left:512px;top:732px;width:501px;height:1px;background:#8e8cc8"></div>
<div class="a" style="left:512px;top:502px;width:470px;height:1px;background:#d8d6fc"></div>
<div class="a" style="left:664px;top:481px;width:86px;height:21px;background:#acaad8"></div>
<div class="a" style="left:665px;top:481px;width:84px;height:1px;background:#d8d6fc"></div>
<div class="a" style="left:664px;top:482px;width:1px;height:20px;background:#d8d6fc"></div>
<div class="a" style="left:749px;top:482px;width:1px;height:20px;background:#0a0624"></div>
<div class="a" style="left:748px;top:482px;width:1px;height:20px;background:#8e8cc8"></div>
<div class="a t" style="left:670px;top:486px;font-size:11px;line-height:11px;letter-spacing:-0.2px;white-space:nowrap">Kereskedelem</div>
<div class="a" style="left:750px;top:481px;width:122px;height:21px;background:#acaad8"></div>
<div class="a" style="left:751px;top:481px;width:120px;height:1px;background:#d8d6fc"></div>
<div class="a" style="left:750px;top:482px;width:1px;height:20px;background:#d8d6fc"></div>
<div class="a" style="left:871px;top:482px;width:1px;height:20px;background:#0a0624"></div>
<div class="a" style="left:870px;top:482px;width:1px;height:20px;background:#8e8cc8"></div>
<div class="a t" style="left:758px;top:486px;font-size:11px;line-height:11px;letter-spacing:-0.13px;white-space:nowrap">Készültségek, járatok</div>
<div class="a" style="left:872px;top:481px;width:67px;height:21px;background:#acaad8"></div>
<div class="a" style="left:873px;top:481px;width:65px;height:1px;background:#d8d6fc"></div>
<div class="a" style="left:872px;top:482px;width:1px;height:20px;background:#d8d6fc"></div>
<div class="a" style="left:938px;top:482px;width:1px;height:20px;background:#0a0624"></div>
<div class="a" style="left:937px;top:482px;width:1px;height:20px;background:#8e8cc8"></div>
<div class="a t" style="left:879px;top:486px;font-size:11px;line-height:11px;letter-spacing:-0.25px;white-space:nowrap">Besorolás</div>
<div class="a" style="left:939px;top:481px;width:52px;height:21px;background:#acaad8"></div>
<div class="a" style="left:940px;top:481px;width:50px;height:1px;background:#d8d6fc"></div>
<div class="a" style="left:939px;top:482px;width:1px;height:20px;background:#d8d6fc"></div>
<div class="a" style="left:990px;top:482px;width:1px;height:20px;background:#0a0624"></div>
<div class="a" style="left:989px;top:482px;width:1px;height:20px;background:#8e8cc8"></div>
<div class="a t" style="left:946px;top:486px;font-size:11px;line-height:11px;letter-spacing:-0.2px;white-space:nowrap">Főkönyv</div>
<div class="a" style="left:513px;top:479px;width:151px;height:24px;background:#acaad8"></div>
<div class="a" style="left:514px;top:479px;width:149px;height:1px;background:#d8d6fc"></div>
<div class="a" style="left:513px;top:480px;width:1px;height:23px;background:#d8d6fc"></div>
<div class="a" style="left:663px;top:480px;width:1px;height:22px;background:#0a0624"></div>
<div class="a" style="left:662px;top:480px;width:1px;height:22px;background:#8e8cc8"></div>
<div class="a t" style="left:521px;top:485px;font-size:11px;line-height:11px;letter-spacing:-0.2px;white-space:nowrap">Cím vállalatfüggő jellemzők</div>
<div class="a" style="left:981px;top:478px;width:32px;height:24px;background:#acaad8"></div>
<div class="a" style="left:981px;top:479px;width:16px;height:23px;background:#acaad8;box-sizing:border-box;border-top:1px solid #d8d6fc;border-left:1px solid #d8d6fc;border-right:1px solid #0a0624;border-bottom:1px solid #0a0624;"></div>
<div class="a" style="left:997px;top:479px;width:16px;height:23px;background:#acaad8;box-sizing:border-box;border-top:1px solid #d8d6fc;border-left:1px solid #d8d6fc;border-right:1px solid #0a0624;border-bottom:1px solid #0a0624;"></div>
<svg class="a" style="left:986px;top:487px" width="5" height="8" viewBox="0 0 5 8"><path d="M4.5 0 V8 L0.5 4Z" fill="#8a88b8"/></svg>
<svg class="a" style="left:1003px;top:487px" width="5" height="8" viewBox="0 0 5 8"><path d="M0.5 0 V8 L4.5 4Z" fill="#000"/></svg>
<div class="a t" style="left:524px;top:519px;font-size:11px;line-height:11px;letter-spacing:-0.33px;white-space:nowrap;z-index:2;">Paritás</div>
<div class="a" style="left:632px;top:514px;width:148px;height:20px;background:#d8d6fc;box-sizing:border-box;border-top:1px solid #8c88d0;border-left:1px solid #8c88d0;"></div>
<div class="a" style="left:633px;top:515px;width:146px;height:18px;background:#fff;box-sizing:border-box;border-top:2px solid #0a0624;border-left:2px solid #0a0624;border-bottom:1px solid #e4e4f0;border-right:1px solid #e4e4f0"></div>
<div class="a" style="left:780px;top:514px;width:221px;height:20px;background:#d8d6fc;box-sizing:border-box;border-top:1px solid #8c88d0;border-left:1px solid #8c88d0;"></div>
<div class="a" style="left:781px;top:515px;width:219px;height:18px;background:#fff;box-sizing:border-box;border-top:2px solid #0a0624;border-left:2px solid #0a0624;border-bottom:1px solid #e4e4f0;border-right:1px solid #e4e4f0"></div>
<div class="a t" style="left:523px;top:544px;font-size:11px;line-height:11px;letter-spacing:-0.25px;white-space:nowrap;z-index:2;">Járat</div>
<div class="a" style="left:632px;top:538px;width:103px;height:21px;background:#d8d6fc;box-sizing:border-box;border-top:1px solid #8c88d0;border-left:1px solid #8c88d0;"></div>
<div class="a" style="left:633px;top:539px;width:101px;height:19px;background:#fff;box-sizing:border-box;border-top:2px solid #0a0624;border-left:2px solid #0a0624;border-bottom:1px solid #e4e4f0;border-right:1px solid #e4e4f0"></div>
<div class="a" style="left:736px;top:537px;width:38px;height:23px;background:#acaad8;box-sizing:border-box;border-top:1px solid #d8d6fc;border-left:1px solid #d8d6fc;border-right:1px solid #0a0624;border-bottom:1px solid #0a0624;border-bottom:2px solid #0a0624;border-right:2px solid #0a0624"></div>
<div class="a t" style="left:747px;top:544px;font-size:11px;line-height:11px;letter-spacing:0.75px">V.?</div>
<div class="a t" style="left:774px;top:544px;font-size:11px;line-height:11px;letter-spacing:-0.2px;white-space:nowrap;z-index:2;">Rakodási sorrend</div>
<div class="a" style="left:858px;top:538px;width:143px;height:21px;background:#d8d6fc;box-sizing:border-box;border-top:1px solid #8c88d0;border-left:1px solid #8c88d0;"></div>
<div class="a" style="left:859px;top:539px;width:141px;height:19px;background:#fff;box-sizing:border-box;border-top:2px solid #0a0624;border-left:2px solid #0a0624;border-bottom:1px solid #e4e4f0;border-right:1px solid #e4e4f0"></div>
<div class="a t" style="left:524px;top:568px;font-size:11px;line-height:11px;letter-spacing:-0.14px;white-space:nowrap;z-index:2;">Szállítási cím?</div>
<div class="a" style="left:632px;top:567px;width:12px;height:12px;background:#fff;box-sizing:border-box;border-top:2px solid #0a0624;border-left:2px solid #0a0624;border-right:1px solid #d8d6fc;border-bottom:1px solid #d8d6fc"></div>
<div class="a t" style="left:724px;top:568px;font-size:11px;line-height:11px;letter-spacing:0px;white-space:nowrap;z-index:2;">Szállító cím?</div>
<div class="a" style="left:793px;top:567px;width:12px;height:12px;background:#fff;box-sizing:border-box;border-top:2px solid #0a0624;border-left:2px solid #0a0624;border-right:1px solid #d8d6fc;border-bottom:1px solid #d8d6fc"></div>
<div class="a t" style="left:884px;top:568px;font-size:11px;line-height:11px;letter-spacing:-0.1px;white-space:nowrap;z-index:2;">Élőállat szállító cím?</div>
<div class="a" style="left:988px;top:567px;width:12px;height:12px;background:#fff;box-sizing:border-box;border-top:2px solid #0a0624;border-left:2px solid #0a0624;border-right:1px solid #d8d6fc;border-bottom:1px solid #d8d6fc"></div>
<div class="a t" style="left:524px;top:591px;font-size:11px;line-height:11px;letter-spacing:0px;white-space:nowrap;z-index:2;">Ügynök/kirendeltség</div>
<div class="a" style="left:632px;top:586px;width:148px;height:20px;background:#d8d6fc;box-sizing:border-box;border-top:1px solid #8c88d0;border-left:1px solid #8c88d0;"></div>
<div class="a" style="left:633px;top:587px;width:146px;height:18px;background:#fff;box-sizing:border-box;border-top:2px solid #0a0624;border-left:2px solid #0a0624;border-bottom:1px solid #e4e4f0;border-right:1px solid #e4e4f0"></div>
<div class="a" style="left:780px;top:586px;width:221px;height:20px;background:#d8d6fc;box-sizing:border-box;border-top:1px solid #8c88d0;border-left:1px solid #8c88d0;"></div>
<div class="a" style="left:781px;top:587px;width:219px;height:18px;background:#fff;box-sizing:border-box;border-top:2px solid #0a0624;border-left:2px solid #0a0624;border-bottom:1px solid #e4e4f0;border-right:1px solid #e4e4f0"></div>
<div class="a t" style="left:524px;top:614px;font-size:11px;line-height:11px;letter-spacing:0px;white-space:nowrap;z-index:2;">Beszállító kód</div>
<div class="a" style="left:632px;top:609px;width:143px;height:20px;background:#d8d6fc;box-sizing:border-box;border-top:1px solid #8c88d0;border-left:1px solid #8c88d0;"></div>
<div class="a" style="left:633px;top:610px;width:141px;height:18px;background:#fff;box-sizing:border-box;border-top:2px solid #0a0624;border-left:2px solid #0a0624;border-bottom:1px solid #e4e4f0;border-right:1px solid #e4e4f0"></div>
<div class="a t" style="left:774px;top:614px;font-size:11px;line-height:11px;letter-spacing:0px;white-space:nowrap;z-index:2;">Hivatkozás</div>
<div class="a" style="left:858px;top:609px;width:143px;height:20px;background:#d8d6fc;box-sizing:border-box;border-top:1px solid #8c88d0;border-left:1px solid #8c88d0;"></div>
<div class="a" style="left:859px;top:610px;width:141px;height:18px;background:#fff;box-sizing:border-box;border-top:2px solid #0a0624;border-left:2px solid #0a0624;border-bottom:1px solid #e4e4f0;border-right:1px solid #e4e4f0"></div>
<div class="a t" style="left:524px;top:637px;font-size:11px;line-height:11px;letter-spacing:-0.33px;white-space:nowrap;z-index:2;">Vállalat megjegyzés</div>
<div class="a" style="left:632px;top:632px;width:369px;height:20px;background:#d8d6fc;box-sizing:border-box;border-top:1px solid #8c88d0;border-left:1px solid #8c88d0;"></div>
<div class="a" style="left:633px;top:633px;width:367px;height:18px;background:#fff;box-sizing:border-box;border-top:2px solid #0a0624;border-left:2px solid #0a0624;border-bottom:1px solid #e4e4f0;border-right:1px solid #e4e4f0"></div>
<div class="a t" style="left:524px;top:659px;font-size:11px;line-height:11px;letter-spacing:0px;white-space:nowrap;z-index:2;">Ean kód</div>
<div class="a" style="left:632px;top:654px;width:143px;height:20px;background:#d8d6fc;box-sizing:border-box;border-top:1px solid #8c88d0;border-left:1px solid #8c88d0;"></div>
<div class="a" style="left:633px;top:655px;width:141px;height:18px;background:#fff;box-sizing:border-box;border-top:2px solid #0a0624;border-left:2px solid #0a0624;border-bottom:1px solid #e4e4f0;border-right:1px solid #e4e4f0"></div>
<div class="a t" style="left:774px;top:659px;font-size:11px;line-height:11px;letter-spacing:-0.21px;white-space:nowrap;z-index:2;">Raktár számláz?</div>
<div class="a" style="left:923px;top:657px;width:12px;height:12px;background:#fff;box-sizing:border-box;border-top:2px solid #0a0624;border-left:2px solid #0a0624;border-right:1px solid #d8d6fc;border-bottom:1px solid #d8d6fc"></div>
<div class="a t" style="left:524px;top:682px;font-size:11px;line-height:11px;letter-spacing:-0.12px;white-space:nowrap;z-index:2;">Élőállat átvétel ár típus</div>
<div class="a" style="left:632px;top:677px;width:369px;height:20px;background:#d8d6fc;box-sizing:border-box;border-top:1px solid #8c88d0;border-left:1px solid #8c88d0;"></div>
<div class="a" style="left:633px;top:678px;width:367px;height:18px;background:#fff;box-sizing:border-box;border-top:2px solid #0a0624;border-left:2px solid #0a0624;border-bottom:1px solid #e4e4f0;border-right:1px solid #e4e4f0"></div>
<div class="a" style="left:983px;top:679px;width:15px;height:16px;background:#acaad8;box-sizing:border-box;border-top:1px solid #d8d6fc;border-left:1px solid #d8d6fc;border-right:1px solid #0a0624;border-bottom:1px solid #0a0624;"></div>
<svg class="a" style="left:987px;top:685px" width="7" height="4" viewBox="0 0 7 4"><path d="M0 0 H7 L3.5 4Z" fill="#000"/></svg>
<div class="a" style="left:4px;top:741px;width:41px;height:16px;background:#acaad8;box-sizing:border-box;border-top:1px solid #6c6aa8;border-left:1px solid #6c6aa8;border-bottom:1px solid #d8d6fc;border-right:1px solid #d8d6fc"></div>
<div class="a" style="left:47px;top:741px;width:102px;height:16px;background:#acaad8;box-sizing:border-box;border-top:1px solid #6c6aa8;border-left:1px solid #6c6aa8;border-bottom:1px solid #d8d6fc;border-right:1px solid #d8d6fc"></div>
<div class="a" style="left:151px;top:741px;width:19px;height:16px;background:#acaad8;box-sizing:border-box;border-top:1px solid #6c6aa8;border-left:1px solid #6c6aa8;border-bottom:1px solid #d8d6fc;border-right:1px solid #d8d6fc"></div>
<div class="a" style="left:171px;top:741px;width:841px;height:16px;background:#acaad8;box-sizing:border-box;border-top:1px solid #6c6aa8;border-left:1px solid #6c6aa8;border-bottom:1px solid #d8d6fc;border-right:1px solid #d8d6fc"></div>
<div class="a t" style="left:5px;top:744px;font-size:11px;line-height:11px;letter-spacing:0.33px">-v1.72X</div>
<div class="a t" style="left:48px;top:744px;font-size:11px;line-height:11px;letter-spacing:0.17px">16 / 16</div>
<div class="a" style="left:155px;top:744px;width:10px;height:10px;border-radius:50%;background:#fff;box-sizing:border-box;border-left:1px solid #444;border-top:1px solid #444"></div>
<div class="a t" style="left:172px;top:744px;font-size:11px;line-height:11px;letter-spacing:0.17px">(*)A partner egyedi kódja</div>
<div class="a" style="left:365px;top:291px;width:293px;height:129px;background:#acaad8;box-sizing:border-box;border-top:1px solid #d8d6fc;border-left:1px solid #d8d6fc;border-right:1px solid #0a0624;border-bottom:1px solid #0a0624"></div>
<div class="a" style="left:366px;top:292px;width:291px;height:127px;box-sizing:border-box;border-top:1px solid #e8e8ff;border-left:1px solid #e8e8ff;border-right:1px solid #7c7ab8;border-bottom:1px solid #7c7ab8"></div>
<div class="a" style="left:368px;top:294px;width:286px;height:22px;background:linear-gradient(to right,#6454c0 0%,#6a5cc0 25%,#8a78c8 60%,#b08cc8 88%,#c090c8 100%)"></div>
<div class="a" style="left:370px;top:295px;width:20px;height:20px;background:#fafcfc"></div>
<svg class="a" style="left:372px;top:297px" width="16" height="16" viewBox="0 0 16 16"><path d="M3 6 A5.5 5.5 0 1 1 6 13.5" stroke="#5a80b0" stroke-width="2.2" fill="none"/></svg>
<div class="a t" style="left:391px;top:297px;font-size:17px;line-height:17px;color:#fff;letter-spacing:-0.6px">ROOL</div>
<div class="a" style="left:633px;top:296px;width:20px;height:18px;background:#b0acdc;box-sizing:border-box;border-top:1px solid #e0e0ff;border-left:1px solid #e0e0ff;border-right:1px solid #101030;border-bottom:1px solid #101030;"></div>
<svg class="a" style="left:638px;top:300px" width="10" height="9" viewBox="0 0 10 9"><path d="M1 0.8 L9 8.2 M9 0.8 L1 8.2" stroke="#000" stroke-width="2.2" fill="none"/></svg>
<svg class="a" style="left:380px;top:329px" width="32" height="32" viewBox="0 0 32 32"><path d="M16 2 L30 28 Q30.5 30 28.5 30 H3.5 Q1.5 30 2 28 Z" fill="#ffff40" stroke="#000" stroke-width="1.3" stroke-linejoin="round"/><path d="M30.5 29.5 H4 " stroke="#888" stroke-width="1" opacity="0.6"/><path d="M14 10 H18 L17 21 H15 Z" fill="#000"/><circle cx="16" cy="25" r="2" fill="#000"/></svg>
<div class="a t" style="left:427px;top:334px;font-size:11px;line-height:11px;letter-spacing:0.82px">Az ajánlás szerinti kód: 1016, rögzíti?</div>
<div class="a" style="left:381px;top:375px;width:82px;height:28px;box-sizing:border-box;border:1px solid #0a0624;background:#acaad8"></div>
<div class="a" style="left:382px;top:376px;width:80px;height:26px;background:#acaad8;box-sizing:border-box;border-top:1px solid #d8d6fc;border-left:1px solid #d8d6fc;border-right:1px solid #0a0624;border-bottom:1px solid #0a0624;border-bottom:2px solid #0a0624;border-right:2px solid #0a0624"></div>
<div class="a" style="left:387px;top:380px;width:70px;height:18px;box-sizing:border-box;border:1px dotted #000"></div>
<div class="a t" style="left:408px;top:385px;font-size:11px;line-height:11px;letter-spacing:1.3px">Igen</div>
<div class="a" style="left:471px;top:375px;width:81px;height:28px;background:#acaad8;box-sizing:border-box;border-top:1px solid #d8d6fc;border-left:1px solid #d8d6fc;border-right:1px solid #0a0624;border-bottom:1px solid #0a0624;border-bottom:2px solid #0a0624;border-right:2px solid #0a0624"></div>
<div class="a t" style="left:496px;top:385px;font-size:11px;line-height:11px;letter-spacing:1.5px">Nem</div>
<div class="a" style="left:560px;top:375px;width:80px;height:28px;background:#acaad8;box-sizing:border-box;border-top:1px solid #d8d6fc;border-left:1px solid #d8d6fc;border-right:1px solid #0a0624;border-bottom:1px solid #0a0624;border-bottom:2px solid #0a0624;border-right:2px solid #0a0624"></div>
<div class="a t" style="left:574px;top:385px;font-size:11px;line-height:11px;letter-spacing:1.3px">Mégsem</div>
</body></html>
